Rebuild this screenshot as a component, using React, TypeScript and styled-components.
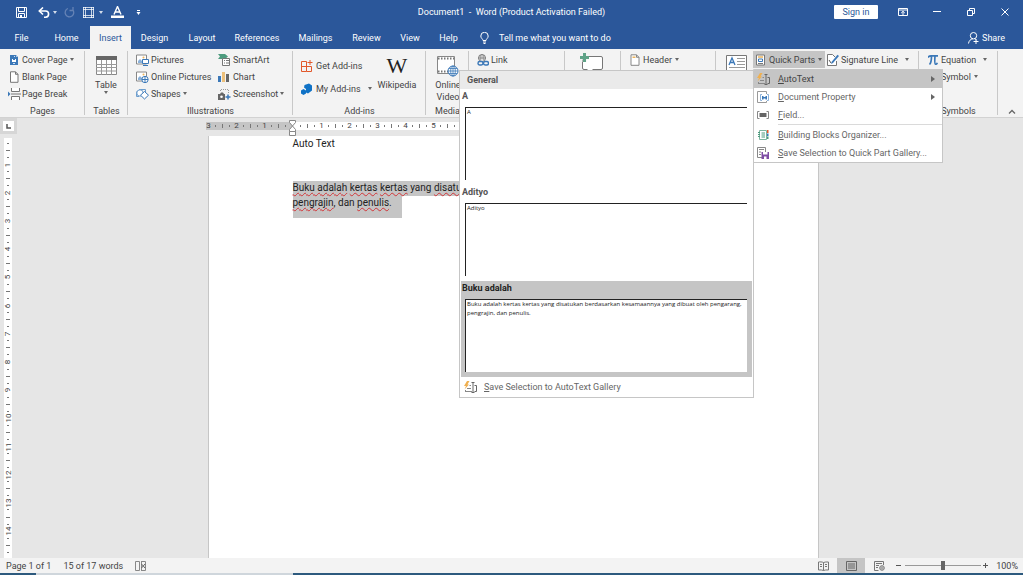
import React from 'react';
import styled, { createGlobalStyle, css } from 'styled-components';

const ui = 'Roboto, "Open Sans", sans-serif';
const blue = '#2b579a';
const chrome = '#f3f3f3';
const selected = '#c5c5c5';

const Global = createGlobalStyle`
  *, *::before, *::after { box-sizing: border-box; }
  body { margin: 0; font: 9px/12px ${ui}; color: #444; }
  button { font: inherit; color: inherit; background: none; border: 0; padding: 0; margin: 0; white-space: nowrap; cursor: default; }
  svg { display: block; flex: none; }
`;

const Shell = styled.div`
  display: flex;
  flex-direction: column;
  min-height: 100vh;
  overflow: hidden;
  background: #e6e6e6;
`;

/* ---------- title bar and tabs ---------- */

const TitleBar = styled.header`
  display: grid;
  grid-template-columns: 1fr auto 1fr;
  align-items: center;
  height: 24px;
  background: ${blue};
  color: #fff;
`;

const QuickAccess = styled.div`
  display: flex;
  align-items: center;
  padding-left: 16px;
`;

const QuickButton = styled.button<{ $after?: number }>`
  display: flex;
  align-items: center;
  gap: 3px;
  margin-right: ${p => p.$after ?? 8}px;
`;

const Title = styled.h1`
  margin: 0;
  font-size: 9px;
  font-weight: 400;
  white-space: pre;
`;

const WindowControls = styled.div`
  display: flex;
  align-items: center;
  justify-content: flex-end;
  padding-right: 1px;
`;

const WindowButton = styled.button`
  display: flex;
  align-items: center;
  justify-content: center;
  width: 34px;
  height: 24px;
`;

const SignIn = styled.button`
  width: 44px;
  height: 14px;
  margin-right: 8px;
  background: #fff;
  color: ${blue};
  border-radius: 1px;
`;

const TabBar = styled.nav`
  display: flex;
  height: 25px;
  padding-top: 2px;
  background: ${blue};
  color: #fff;
`;

const Tab = styled.button<{ $width: number; $active?: boolean }>`
  width: ${p => p.$width}px;
  height: 23px;
  ${p => p.$active && css`background: ${chrome}; color: ${blue};`}
`;

const TellMe = styled.button`
  display: flex;
  align-items: center;
  gap: 10px;
  margin-left: 13px;
`;

const Share = styled.button`
  display: flex;
  align-items: center;
  gap: 3px;
  margin-left: auto;
  padding-right: 18px;
`;

/* ---------- ribbon ---------- */

const Ribbon = styled.div`
  display: flex;
  height: 69px;
  padding-top: 2px;
  background: ${chrome};
  border-bottom: 1px solid #d2d2d2;
`;

const Group = styled.section<{ $width: number }>`
  display: grid;
  grid-template-rows: 54px 13px;
  width: ${p => p.$width}px;
  flex: none;
  background: linear-gradient(#c8c8c8, #c8c8c8) right 0 / 1px 64px no-repeat;
`;

const GroupBody = styled.div<{ $inset?: number }>`
  display: flex;
  align-items: flex-start;
  padding-left: ${p => p.$inset ?? 0}px;
`;

const GroupName = styled.h2`
  margin: 0;
  font-size: 9px;
  line-height: 13px;
  font-weight: 400;
  text-align: center;
  white-space: nowrap;
`;

const Column = styled.div<{ $width?: number }>`
  display: flex;
  flex-direction: column;
  align-items: flex-start;
  flex: none;
  ${p => p.$width && css`width: ${p.$width}px;`}
`;

const AddInColumn = styled(Column)`
  padding-top: 6px;
  gap: 6px;
`;

const SignatureColumn = styled(Column)`
  padding-left: 2px;
`;

const Command = styled.button<{ $on?: boolean; $gap?: number }>`
  display: flex;
  align-items: center;
  gap: ${p => p.$gap ?? 3}px;
  height: 17px;
  ${p => p.$on && css`background: ${selected}; width: 72px; padding-left: 2px;`}
`;

const BigCommand = styled.button<{ $width: number; $top?: number }>`
  display: flex;
  flex-direction: column;
  align-items: center;
  flex: none;
  width: ${p => p.$width}px;
  padding-top: ${p => p.$top ?? 5}px;
  line-height: 12px;
`;

const BigIcon = styled.span`
  display: flex;
  height: 23px;
`;

const Collapse = styled.button`
  align-self: flex-end;
  margin: 0 7px 2px auto;
`;

/* ---------- menus ---------- */

const MenuAnchor = styled.div`
  position: relative;
`;

const Menu = styled.div`
  position: absolute;
  z-index: 5;
  top: 18px;
  left: 0;
  width: 190px;
  background: #fff;
  border: 1px solid #c6c6c6;
  border-left-color: #dcdcdc;
  color: #666;
`;

const MenuItem = styled.button<{ $on?: boolean }>`
  display: grid;
  grid-template-columns: 21px 1fr 8px;
  align-items: center;
  width: 100%;
  height: 18px;
  padding: 0 3px;
  text-align: left;
  ${p => p.$on && css`background: ${selected}; color: #444;`}
`;

const Separator = styled.hr`
  height: 1px;
  margin: 0 0 1px 24px;
  border: 0;
  background: #dadada;
`;

const Gallery = styled.div`
  position: absolute;
  top: 0;
  right: 100%;
  width: 295px;
  background: #fff;
  border: 1px solid #c6c6c6;
  color: #666;
`;

const GalleryHeader = styled.h3`
  margin: 0;
  padding-left: 7px;
  height: 18px;
  background: #eaeaea;
  color: #555;
  font-size: 9px;
  line-height: 18px;
  font-weight: 700;
`;

const Entry = styled.button<{ $on?: boolean }>`
  display: flex;
  flex-direction: column;
  width: 291px;
  height: 96px;
  margin: 0 1px;
  padding: 0 5px 5px 1px;
  text-align: left;
  color: #555;
  ${p => p.$on && css`background: ${selected}; color: #222;`}
`;

const EntryName = styled.span`
  font-weight: 700;
  line-height: 15px;
`;

const Preview = styled.span`
  flex: 1;
  align-self: stretch;
  margin: 3px 0 0 3px;
  padding: 0 1px;
  background: #fff;
  border: solid #222;
  border-width: 1px 0 0 1px;
  color: #222;
  font: 6px/9px "Open Sans", sans-serif;
  white-space: pre;
`;

const GallerySave = styled.button`
  display: flex;
  align-items: center;
  gap: 7px;
  width: 100%;
  height: 20px;
  padding-left: 4px;
`;

/* ---------- document area ---------- */

const Workspace = styled.main`
  display: grid;
  grid-template-columns: 17px 1fr;
  grid-template-rows: 18px 1fr;
  flex: 1;
`;

const TabSelector = styled.button`
  display: flex;
  align-items: center;
  justify-content: center;
  width: 17px;
  height: 16px;
  background: #fff;
  border: 3px solid #d6d6d6;
`;

const RulerTrack = styled.div`
  display: flex;
  justify-content: center;
  padding: 4px 15px 0 0;
`;

const Ruler = styled.div`
  position: relative;
  display: flex;
  width: 613px;
  height: 8px;
`;

const RulerMargin = styled.div`
  display: flex;
  justify-content: space-between;
  width: 87px;
  padding-right: 5px;
  background: ${selected};
`;

const RulerBody = styled.div`
  display: flex;
  flex: 1;
  padding-left: 4px;
  background: #fff;
`;

const RulerMark = styled.span<{ $width: number }>`
  display: flex;
  align-items: center;
  justify-content: center;
  flex: none;
  width: ${p => p.$width}px;
  font-size: 8px;
  line-height: 8px;
  color: #444;
`;

const Indent = styled.svg`
  position: absolute;
  left: 82px;
  top: -2px;
`;

const Dot = styled.i<{ $w: number; $h: number }>`
  width: ${p => p.$w}px;
  height: ${p => p.$h}px;
  background: #777;
`;

const VerticalRuler = styled.div`
  display: flex;
  flex-direction: column;
  width: 8px;
  margin: 2px 0 0 4px;
  padding: 2px 0;
  background: #fff;
`;

const VerticalMark = styled.span`
  display: flex;
  align-items: center;
  justify-content: center;
  flex: 1 1 0;
  min-height: 0;
  font-size: 8px;
  line-height: 8px;
  color: #444;
`;

const Turned = styled.span`
  transform: rotate(-90deg);
`;

const PageTrack = styled.div`
  display: flex;
  justify-content: center;
  padding-right: 14px;
`;

const Page = styled.article`
  width: 611px;
  padding: 1px 84px 0;
  background: #fff;
  border: 1px solid #c6c6c6;
  border-width: 0 1px;
  color: #222;
  font: 10px/14px Roboto, sans-serif;
  white-space: nowrap;
`;

const Paragraph = styled.p`
  margin: 0 0 30px;
`;

const SelectedLine = styled.span<{ $last?: boolean }>`
  display: block;
  background: ${selected};
  ${p => p.$last ? css`width: 109px; height: 22px;` : css`height: 15px;`}
`;

const Misspelt = styled.span`
  text-decoration: underline wavy #d13438 1px;
  text-underline-offset: 1px;
  text-decoration-skip-ink: none;
`;

/* ---------- status bar ---------- */

const StatusBar = styled.footer`
  display: flex;
  align-items: center;
  height: 15px;
  padding-left: 6px;
  background: ${chrome};
  color: #444;
`;

const StatusButton = styled.button<{ $after?: number }>`
  margin-right: ${p => p.$after ?? 0}px;
`;

const ViewButton = styled.button<{ $on?: boolean }>`
  display: flex;
  align-items: center;
  justify-content: center;
  width: 28px;
  height: 15px;
  ${p => p.$on && css`background: ${selected};`}
`;

const Views = styled.div`
  display: flex;
  margin-left: auto;
  margin-right: 3px;
`;

const ZoomButton = styled.button`
  display: flex;
  align-items: center;
  width: 9px;
  height: 15px;
`;

const ZoomSlider = styled.input`
  appearance: none;
  width: 76px;
  height: 11px;
  margin: 0 2px 0 0;
  background: linear-gradient(#999, #999) 0 5px / 100% 1px no-repeat;
  &::-webkit-slider-thumb { appearance: none; width: 4px; height: 9px; background: #666; }
  &::-moz-range-thumb { width: 4px; height: 9px; border: 0; border-radius: 0; background: #666; }
`;

const ZoomValue = styled.button`
  width: 31px;
  padding-right: 5px;
  text-align: right;
`;

const Taskbar = styled.div`
  display: grid;
  grid-template-columns: 36px 257px 1fr;
  height: 2px;
  background: #2d5a7e;
  &::before { content: ''; grid-column: 2; background: #cfd6dc; }
`;

/* ---------- icons ---------- */

const CaretShape = styled.svg<{ $before?: number }>`
  margin-left: ${p => p.$before ?? 0}px;
  opacity: 0.8;
`;
const Caret = ({ before }: { before?: number }) => (
  <CaretShape $before={before} width="4" height="3" viewBox="0 0 4 3"><path d="M0 0h4L2 3z" fill="currentColor" /></CaretShape>
);

const Svg = ({ w = 12, h = 12, children }: { w?: number; h?: number; children: React.ReactNode }) => (
  <svg width={w} height={h} viewBox={`0 0 ${w} ${h}`} fill="none" aria-hidden="true">{children}</svg>
);

const SaveIcon = () => <Svg w={11} h={11}><path d="M.5.5h10v10H.5zM2.500.5v4h6v-4M2.500 10.500v-4h6v4" stroke="#fff" /><path d="M4 8h2v3H4z" fill="#fff" /></Svg>;
const UndoIcon = () => <Svg w={12} h={11}><path d="M1.500 4h6a3 3 0 0 1 0 6.200H6" stroke="#fff" strokeWidth="1.600" /><path d="M5 .5 1.300 4 5 7.500" stroke="#fff" strokeWidth="1.600" /></Svg>;
const RedoIcon = () => <Svg w={11} h={11}><path d="M4 1.500a4.300 4.300 0 1 0 4.500 1M9 0v3.500H5.500" stroke="#6482b5" strokeWidth="1.300" /></Svg>;
const GridIcon = () => <Svg w={11} h={11}><path d="M0 .5h11M0 10.500h11M.5 0v11M10.500 0v11M2.500 0v11M8.500 0v11M0 2.500h11M0 8.500h11" stroke="#fff" strokeOpacity=".75" /></Svg>;
const FontColorIcon = () => <Svg w={13} h={12}><path d="M3 8.500 6.500.5 10 8.500M4.200 6h4.600" stroke="#fff" strokeWidth="1.400" /><path d="M0 9.500h13V12H0z" fill="#fff" /></Svg>;
const CustomizeIcon = () => <Svg w={5} h={5}><path d="M1 .5h3" stroke="#fff" /><path d="M.5 2h4l-2 3z" fill="#fff" /></Svg>;
const RibbonOptionsIcon = () => <Svg w={10} h={8}><path d="M.5.5h9v7h-9zM.5 2h9M5 7V3.500M3.200 5 5 3.300 6.800 5" stroke="#fff" /></Svg>;
const MinimizeIcon = () => <Svg w={8} h={8}><path d="M0 3.500h8" stroke="#fff" /></Svg>;
const RestoreIcon = () => <Svg w={8} h={8}><path d="M.5 2.500h5v5h-5zM2.500 2V.5h5v5H6" stroke="#fff" /></Svg>;
const CloseIcon = () => <Svg w={8} h={8}><path d="m.5.5 7 7M7.500.5l-7 7" stroke="#fff" /></Svg>;
const BulbIcon = () => <Svg w={9} h={12}><path d="M3 8.500C3 7 .8 6.300.8 4a3.700 3.700 0 0 1 7.400 0C8.200 6.300 6 7 6 8.500zM3 10h3M3.500 11.500h2" stroke="#fff" /></Svg>;
const ShareIcon = () => <Svg w={11} h={12}><circle cx="5.500" cy="3.700" r="3.200" stroke="#fff" /><path d="M.5 11.500c.3-2.500 2-4.500 4.500-4.700M6.500 6.800c1 .2 1.500.6 2 1.200M8 7v5M5.500 9.500h5" stroke="#fff" /></Svg>;

const CoverIcon = () => <Svg><path d="M2 1h6l2 2v8H2z" fill="#3b78b8" /><path d="M8 1v2h2" fill="#a8c6e6" /><path d="M4 5h1v1h2V5h1v3H4z" fill="#fff" /><path d="M5 9h2v1H5zM6 2h1v1H6z" fill="#cfe0f2" /></Svg>;
const BlankIcon = () => <Svg><path d="M2.500.8h5l2.500 2.500v8H2.500zM7.500.8v2.500H10" stroke="#777" fill="#fff" /></Svg>;
const BreakIcon = () => <Svg w={13}><path d="M3.500 0v3.500h8V0M3.500 12V8.500h8V12" stroke="#777" fill="#fff" /><path d="M3 6h10" stroke="#777" /><path d="m0 3.500 2.500 2.500L0 8.500z" fill="#3b78b8" /></Svg>;
const TableIcon = () => <Svg w={21} h={19}><path d="M.5.5h20v18H.5z" fill="#fff" stroke="#888" /><path d="M0 0h21v4H0z" fill="#666" /><path d="M0 8.500h21M0 11.500h21M0 15h21M5.500 4v15M10.500 4v15M15.500 4v15" stroke="#999" /></Svg>;
const PictureIcon = () => <Svg w={13}><path d="M.5 1h10v9H.5z" stroke="#888" fill="#fff" /><path d="M2 9V7l2-2 2 2v2z" fill="#8ab1da" /><circle cx="7.500" cy="3.500" r="1" fill="#edb45c" /><path d="M6.500 5.500h6v4h-6z" fill="#fff" stroke="#3b78b8" /><path d="M7 11.500h5" stroke="#3b78b8" /></Svg>;
const OnlinePictureIcon = () => <Svg w={13}><path d="M.5 1h10v9H.5z" stroke="#888" fill="#fff" /><path d="M2 9V7l2-2 2 2v2z" fill="#8ab1da" /><circle cx="7.500" cy="3.500" r="1" fill="#edb45c" /><circle cx="9" cy="8.500" r="3.200" fill="#fff" stroke="#3b78b8" /><path d="M6 8.500h6M9 5.500v6" stroke="#3b78b8" /></Svg>;
const ShapesIcon = () => <Svg w={13}><path d="M3 1.500h6.500v3M3 8.500H.5v-5" stroke="#6c9dcd" /><circle cx="4" cy="5" r="3.200" stroke="#6c9dcd" fill="#fff" /><path d="m8.500 3.500 4 3.700-4 3.800-4-3.800z" fill="#fff" stroke="#3b78b8" /></Svg>;
const SmartArtIcon = () => <Svg w={13}><path d="M0 0h7l3 2.500L7 5H0l2-2.500z" fill="#4d9b7e" /><path d="M4.500 4.500h7v7h-7z" fill="#fff" stroke="#777" /><path d="M6 6.500h1M8 6.500h3M6 9h1M8 9h3" stroke="#777" /></Svg>;
const ChartIcon = () => <Svg><path d="M0 5h3v6H0z" fill="#3b78b8" /><path d="M4 1h3v10H4z" fill="#edc07a" /><path d="M8 3h3v8H8z" fill="#666" /></Svg>;
const ScreenshotIcon = () => <Svg w={13}><path d="M2.500 3V1.500h8V6" stroke="#999" strokeDasharray="1 1" /><path d="M0 6h2l1-1.500h2L6 6h1v6H0z" fill="#666" /><circle cx="3.500" cy="8.700" r="1.300" fill="#fff" /><path d="M10 6.500v5M7.500 9h5" stroke="#3b78b8" strokeWidth="1.500" /></Svg>;
const StoreIcon = () => <Svg><path d="M.5 1.500h5v10h-5zM5.500 6.500h5v5h-5M.5 6.500h5" stroke="#e2582b" /><path d="M9 0v5M6.500 2.500h5" stroke="#e2582b" /></Svg>;
const AddInIcon = () => <Svg><path d="M3.500 2 8 .5l3 2v5l-4 3-2-1V6l-2-1.500z" fill="#0f72c6" /><path d="M0 7.500 2.500 6 5 7.500v3L2.500 12 0 10.500z" fill="#0f72c6" /></Svg>;
const FilmIcon = () => <Svg w={22} h={21}><path d="M.5.5h17v17H.5z" fill="#fff" stroke="#888" /><path d="M1 2.500h16M1 15.500h11" stroke="#777" strokeWidth="2" strokeDasharray="1.500 1.500" /><circle cx="16" cy="15" r="5" fill="#fff" stroke="#3b78b8" /><path d="M11 15h10M16 10v10M12 12.500h8M12 17.500h8" stroke="#3b78b8" strokeWidth=".8" /><ellipse cx="16" cy="15" rx="2.300" ry="5" stroke="#3b78b8" strokeWidth=".8" /></Svg>;
const LinkIcon = () => <Svg w={12}><circle cx="5" cy="4" r="3.500" stroke="#777" /><path d="M1.500 4h7M5 .5v5M3.300 1v5M6.700 1v5" stroke="#777" strokeWidth=".7" /><rect x="1" y="7.500" width="5" height="3.500" rx="1.700" stroke="#3b78b8" strokeWidth="1.400" /><rect x="6.500" y="7.500" width="5" height="3.500" rx="1.700" stroke="#3b78b8" strokeWidth="1.400" /></Svg>;
const CommentIcon = () => <Svg w={24} h={20}><rect x="2.500" y="3.500" width="20" height="13" rx="1.500" fill="#fff" stroke="#777" /><path d="M7 16h6l-3 3z" fill="#fff" /><path d="M4.500 0v9M0 4.500h9" stroke="#f3f3f3" strokeWidth="4" /><path d="M4.500 0v9M0 4.500h9" stroke="#5fa287" strokeWidth="3" /></Svg>;
const HeaderIcon = () => <Svg w={11}><path d="M2 .8h5.500L10 3.300v8H2zM7.500.8v2.500H10" fill="#fff" stroke="#888" /><path d="M3.500 2.500h3V4h-3z" fill="#edb45c" /></Svg>;
const TextBoxIcon = () => <Svg w={22} h={18}><path d="M.5.5h20v17H.5z" fill="#fff" stroke="#777" /><path d="m3 10 3-7 3 7M4 7.500h4" stroke="#3b78b8" strokeWidth="1.300" /><path d="M11 3.500h8M11 6.500h8M11 9.500h8M3 12.500h16" stroke="#999" /></Svg>;
const QuickPartsIcon = () => <Svg w={11}><path d="M1.500 1h8v10h-8z" fill="#fff" stroke="#777" /><path d="M3 3h5" stroke="#edb45c" strokeWidth="1.500" /><path d="M3.500 5h4v2.500h-4z" stroke="#3b78b8" /><path d="M3 9.500h5" stroke="#777" /></Svg>;
const SignatureIcon = () => <Svg w={12}><path d="M9.500 7v4.500h-9V.5h5L8 3" fill="#fff" stroke="#777" /><path d="M12 2 6 9l-2 1 .7-2.300L10.500.7z" fill="#3b78b8" /><path d="m2 6 2 3" stroke="#555" /></Svg>;
const PiIcon = () => <Svg w={10}><path d="M0 3.500C.8 2 1.500 1.800 3 1.800h7M3.500 2c0 4-.5 7-2 8.500M7 2c-.4 5-.5 8 .6 8.200.8.200 1.400-.7 1.700-1.500" stroke="#3b78b8" strokeWidth="1.700" /></Svg>;
const OmegaIcon = () => <Svg w={10}><path d="M1 10.500h2.500C1 8 1 2 5 2s4 6 1.500 8.500H9" stroke="#3b78b8" /></Svg>;
const ChevronIcon = () => <Svg w={8} h={6}><path d="m1 4.500 3-3 3 3" stroke="#666" strokeWidth="1.300" /></Svg>;

const AutoTextIcon = () => <Svg w={13}><path d="M3 0 0 5h2L.5 8.500 5 3.500H3.500L5.500 0z" fill="#f0b050" /><path d="M5.500 4.500H7M3 7.500h4M1.500 10.500H8M1.500 9v2" stroke="#888" /><path d="M7.500 1.500h3M7.500 11.500h3M9 2v9M10.500 4.500h2v6h-2" stroke="#666" /></Svg>;
const PropertyIcon = () => <Svg w={13}><path d="M9.500 3V.5h-9v11h9V10" fill="#fff" stroke="#999" /><path d="M5 3.500H3.500v6H5M10 3.500h1.500v6H10" stroke="#8ab1da" /><path d="M5 5h1.500v1h2V5H10v3.500H8.500V7.500h-2v1H5z" fill="#3b78b8" /></Svg>;
const FieldIcon = () => <Svg><path d="M2.500 2.500H.5v7h2M9.500 2.500h2v7h-2" stroke="#888" /><path d="M2.500 4h7v4h-7z" fill="#666" /></Svg>;
const BlocksIcon = () => <Svg><path d="M2.500 1.500h7v9h-7z" fill="#fff" stroke="#7db5a0" /><path d="M1 3.500h2M1 5.500h2M1 7.500h2M4.500 4h3.500M4.500 6h3.500M4.500 8h3.500" stroke="#4d9b7e" /><path d="M10 1h1.500v3H10z" fill="#e2582b" /><path d="M10 4.500h1.500V7H10z" fill="#3b78b8" /><path d="M10 7.500h1.500v2.500H10z" fill="#4d9b7e" /></Svg>;
const SavePartIcon = () => <Svg><path d="M.5.5h8v10h-8z" fill="#fff" stroke="#888" /><path d="M2 2.500h5M2 5h2M2 7.500h2" stroke="#888" /><path d="M4.500 5H12v7H4.500z" fill="#7e4ea5" /><path d="M6 5h4.500v2.500H6zM7 9.500h2.500V12H7z" fill="#fff" /></Svg>;

const ProofIcon = () => <Svg w={12} h={10}><path d="M4.500 9.500h-4v-9h4zM6.500 10V0M6.500.5h4v9h-4" stroke="#888" /><path d="m6.500 3 3.500 4M10 3 6.500 7" stroke="#666" /></Svg>;
const ReadIcon = () => <Svg w={11} h={10}><path d="M5.500 9.500V1.500C4 .8 2 .8.5 1v8c2-.3 3.500 0 5 .5 1.500-.5 3-.8 5-.5V1c-2-.2-3.500 0-5 .5" stroke="#777" /><path d="M2 3.500h2M2 5.500h2M7 3.500h2M7 5.500h2" stroke="#777" /></Svg>;
const PrintIcon = () => <Svg w={11} h={10}><path d="M.5.5h10v9H.5zM2 3h7M2 5h7M2 7h7" stroke="#666" /></Svg>;
const WebIcon = () => <Svg w={11} h={10}><path d="M4.500 9.500h-4v-9h9V4M2 2.500h6M2 4.500h3M2 6.500h2" stroke="#777" /><circle cx="8" cy="7" r="2.300" stroke="#777" /><path d="M6 7h4M8 5v4" stroke="#777" strokeWidth=".7" /></Svg>;

/* ---------- composition ---------- */

const tabs: [string, number][] = [
  ['File', 43], ['Home', 47], ['Insert', 41], ['Design', 47], ['Layout', 48], ['References', 62],
  ['Mailings', 55], ['Review', 47], ['View', 40], ['Help', 37],
];

const Arrow = () => <Svg w={4} h={6}><path d="m0 0 4 3-4 3z" fill="#666" /></Svg>;

const Label = ({ text }: { text: string }) => <span><u>{text[0]}</u>{text.slice(1)}</span>;

const mark = (i: number, from: number, step: number, vertical = false) => {
  if (i % 4 === 0) {
    const n = from + (i / 4) * step;
    return vertical ? <Turned>{n}</Turned> : n;
  }
  if (vertical) return <Dot $w={i % 4 === 2 ? 4 : 2} $h={1} />;
  return <Dot $w={1} $h={i % 4 === 2 ? 4 : 2} />;
};

const range = (n: number) => Array.from({ length: n }, (_, i) => i);

const AutoTextGallery = () => (
  <Gallery>
    <GalleryHeader>General</GalleryHeader>
    <Entry><EntryName>A</EntryName><Preview>A</Preview></Entry>
    <Entry><EntryName>Adityo</EntryName><Preview>Adityo</Preview></Entry>
    <Entry $on>
      <EntryName>Buku adalah</EntryName>
      <Preview>{'Buku adalah kertas kertas yang disatukan berdasarkan kesamaannya yang dibuat oleh pengarang,\npengrajin, dan penulis.'}</Preview>
    </Entry>
    <GallerySave><AutoTextIcon /><Label text="Save Selection to AutoText Gallery" /></GallerySave>
  </Gallery>
);

const QuickPartsMenu = () => (
  <Menu>
    <MenuItem $on><AutoTextIcon /><Label text="AutoText" /><Arrow /></MenuItem>
    <MenuItem><PropertyIcon /><Label text="Document Property" /><Arrow /></MenuItem>
    <MenuItem><FieldIcon /><Label text="Field..." /></MenuItem>
    <Separator />
    <MenuItem><BlocksIcon /><Label text="Building Blocks Organizer..." /></MenuItem>
    <MenuItem><SavePartIcon /><Label text="Save Selection to Quick Part Gallery..." /></MenuItem>
    <AutoTextGallery />
  </Menu>
);

const WikiMark = styled.span`
  font: 22px/19px "Liberation Serif", serif;
  color: #222;
`;

export default function App() {
  return (
    <Shell>
      <Global />
      <TitleBar>
        <QuickAccess>
          <QuickButton aria-label="Save" $after={11}><SaveIcon /></QuickButton>
          <QuickButton aria-label="Undo" $after={7}><UndoIcon /><Caret /></QuickButton>
          <QuickButton aria-label="Redo"><RedoIcon /></QuickButton>
          <QuickButton aria-label="Borders"><GridIcon /><Caret before={2} /></QuickButton>
          <QuickButton aria-label="Font color" $after={12}><FontColorIcon /></QuickButton>
          <QuickButton aria-label="Customize toolbar"><CustomizeIcon /></QuickButton>
        </QuickAccess>
        <Title>{'Document1  -  Word (Product Activation Failed)'}</Title>
        <WindowControls>
          <SignIn>Sign in</SignIn>
          <WindowButton aria-label="Ribbon display options"><RibbonOptionsIcon /></WindowButton>
          <WindowButton aria-label="Minimize"><MinimizeIcon /></WindowButton>
          <WindowButton aria-label="Restore"><RestoreIcon /></WindowButton>
          <WindowButton aria-label="Close"><CloseIcon /></WindowButton>
        </WindowControls>
      </TitleBar>
      <TabBar>
        {tabs.map(([name, width]) => <Tab key={name} $width={width} $active={name === 'Insert'}>{name}</Tab>)}
        <TellMe><BulbIcon />Tell me what you want to do</TellMe>
        <Share><ShareIcon />Share</Share>
      </TabBar>

      <Ribbon>
        <Group $width={85}>
          <GroupBody $inset={8}>
            <Column>
              <Command $gap={2}><CoverIcon />Cover Page<Caret /></Command>
              <Command $gap={2}><BlankIcon />Blank Page</Command>
              <Command $gap={1}><BreakIcon />Page Break</Command>
            </Column>
          </GroupBody>
          <GroupName>Pages</GroupName>
        </Group>
        <Group $width={43}>
          <GroupBody><BigCommand $width={42}><BigIcon><TableIcon /></BigIcon>Table<Caret /></BigCommand></GroupBody>
          <GroupName>Tables</GroupName>
        </Group>
        <Group $width={165}>
          <GroupBody $inset={8}>
            <Column $width={82}>
              <Command $gap={2}><PictureIcon />Pictures</Command>
              <Command $gap={2}><OnlinePictureIcon />Online Pictures</Command>
              <Command $gap={2}><ShapesIcon />Shapes<Caret /></Command>
            </Column>
            <Column>
              <Command $gap={2}><SmartArtIcon />SmartArt</Command>
              <Command><ChartIcon />Chart</Command>
              <Command $gap={2}><ScreenshotIcon />Screenshot<Caret /></Command>
            </Column>
          </GroupBody>
          <GroupName>Illustrations</GroupName>
        </Group>
        <Group $width={133}>
          <GroupBody $inset={8}>
            <AddInColumn $width={76}>
              <Command><StoreIcon />Get Add-ins</Command>
              <Command><AddInIcon />My Add-ins<Caret before={4} /></Command>
            </AddInColumn>
            <BigCommand $width={40}><BigIcon><WikiMark>W</WikiMark></BigIcon>Wikipedia</BigCommand>
          </GroupBody>
          <GroupName>Add-ins</GroupName>
        </Group>
        <Group $width={43}>
          <GroupBody $inset={2}><BigCommand $width={40}><BigIcon><FilmIcon /></BigIcon>Online<br />Video</BigCommand></GroupBody>
          <GroupName>Media</GroupName>
        </Group>
        <Group $width={96}>
          <GroupBody $inset={8}><Command $gap={2}><LinkIcon />Link</Command></GroupBody>
        </Group>
        <Group $width={56}>
          <GroupBody><BigCommand $width={54} $top={2} aria-label="Comment"><CommentIcon /></BigCommand></GroupBody>
        </Group>
        <Group $width={95}>
          <GroupBody $inset={8}><Command><HeaderIcon />Header<Caret /></Command></GroupBody>
        </Group>
        <Group $width={203}>
          <GroupBody $inset={4}>
            <BigCommand $width={33} $top={4} aria-label="Text Box"><TextBoxIcon /></BigCommand>
            <MenuAnchor>
              <Command $on><QuickPartsIcon />Quick Parts<Caret /></Command>
              <QuickPartsMenu />
            </MenuAnchor>
            <SignatureColumn>
              <Command $gap={2}><SignatureIcon />Signature Line<Caret before={5} /></Command>
            </SignatureColumn>
          </GroupBody>
        </Group>
        <Group $width={79}>
          <GroupBody $inset={9}>
            <Column>
              <Command><PiIcon />Equation<Caret before={4} /></Command>
              <Command><OmegaIcon />Symbol<Caret /></Command>
            </Column>
          </GroupBody>
          <GroupName>Symbols</GroupName>
        </Group>
        <Collapse aria-label="Collapse the ribbon"><ChevronIcon /></Collapse>
      </Ribbon>

      <Workspace>
        <TabSelector aria-label="Tab stop"><Svg w={5} h={5}><path d="M1 0v4h4" stroke="#555" strokeWidth="1.500" /></Svg></TabSelector>
        <RulerTrack>
          <Ruler>
            <RulerMargin>{range(12).map(i => <RulerMark key={i} $width={5}>{mark(i, 3, -1)}</RulerMark>)}</RulerMargin>
            <RulerBody>{range(70).map(i => <RulerMark key={i} $width={7}>{mark(i + 1, 0, 1)}</RulerMark>)}</RulerBody>
            <Indent width="9" height="16" viewBox="0 0 9 16" fill="#fff" stroke="#888"><path d="M1.500.5h6v2L4.500 6l-3-3.500zM1.500 11.500V9.500l3-3.500 3 3.500v2zM1.500 11.500h6v4h-6z" /></Indent>
          </Ruler>
        </RulerTrack>
        <VerticalRuler>{range(59).map(i => <VerticalMark key={i}>{mark(i + 1, 0, 1, true)}</VerticalMark>)}</VerticalRuler>
        <PageTrack>
          <Page>
            <Paragraph>Auto Text</Paragraph>
            <SelectedLine>
              <Misspelt>Buku adalah</Misspelt>{' '}<Misspelt>kertas</Misspelt> <Misspelt>kertas</Misspelt> yang <Misspelt>disatukan</Misspelt>
            </SelectedLine>
            <SelectedLine $last><Misspelt>pengrajin</Misspelt>, dan <Misspelt>penulis</Misspelt>.</SelectedLine>
          </Page>
        </PageTrack>
      </Workspace>

      <StatusBar>
        <StatusButton $after={12}>Page 1 of 1</StatusButton>
        <StatusButton $after={12}>15 of 17 words</StatusButton>
        <StatusButton aria-label="Proofing"><ProofIcon /></StatusButton>
        <Views>
          <ViewButton aria-label="Read mode"><ReadIcon /></ViewButton>
          <ViewButton aria-label="Print layout" $on><PrintIcon /></ViewButton>
          <ViewButton aria-label="Web layout"><WebIcon /></ViewButton>
        </Views>
        <ZoomButton aria-label="Zoom out"><Svg w={5} h={5}><path d="M0 2.500h5" stroke="#555" /></Svg></ZoomButton>
        <ZoomSlider type="range" aria-label="Zoom" defaultValue={50} />
        <ZoomButton aria-label="Zoom in"><Svg w={5} h={5}><path d="M0 2.500h5M2.500 0v5" stroke="#555" /></Svg></ZoomButton>
        <ZoomValue>100%</ZoomValue>
      </StatusBar>
      <Taskbar />
    </Shell>
  );
}
